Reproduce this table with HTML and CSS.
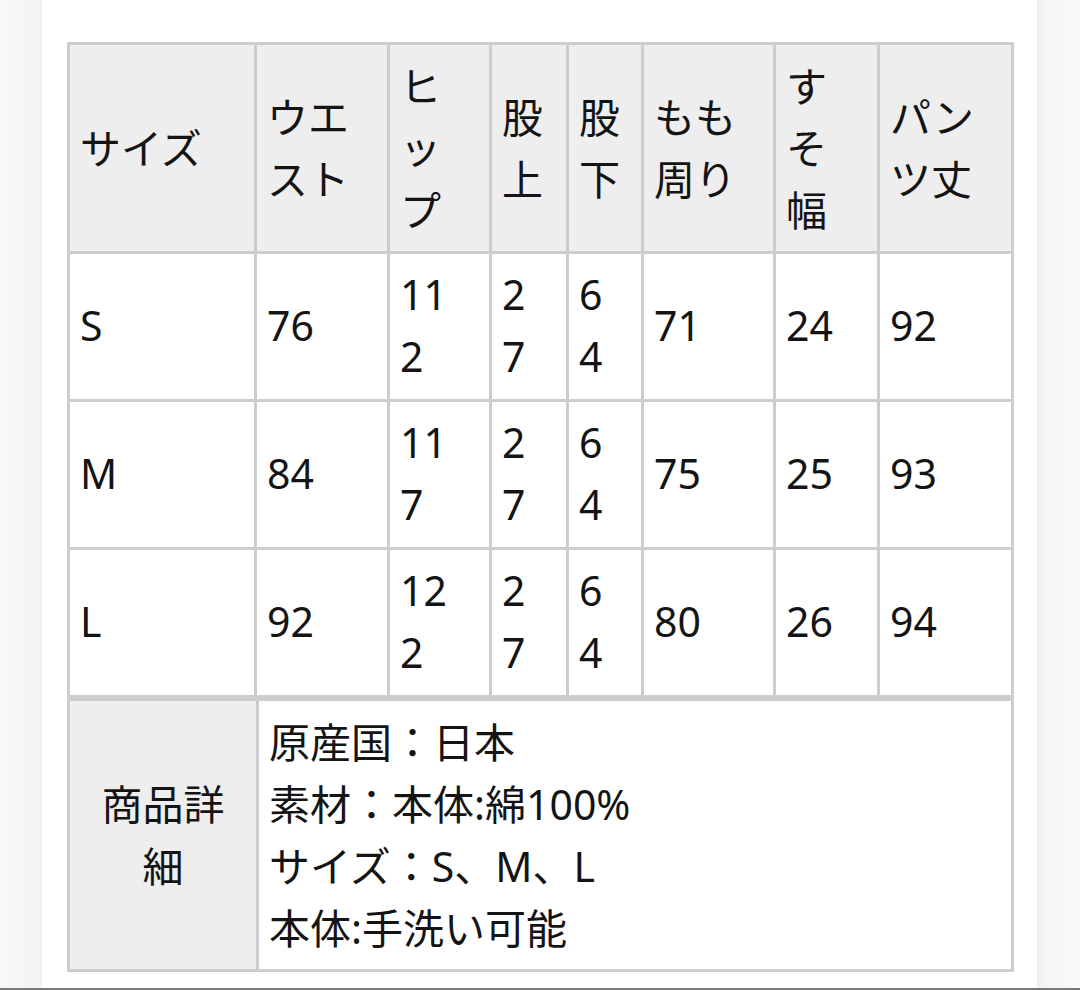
FILE: index.html
```html
<!DOCTYPE html>
<html lang="ja">
<head>
<meta charset="utf-8">
<title>サイズ表</title>
<link rel="stylesheet" href="styles.css">
</head>
<body>
<div class="page">
  <div class="card">
    <table class="size-table">
      <colgroup>
        <col class="c1"><col class="c2"><col class="c3"><col class="c4"><col class="c5"><col class="c6"><col class="c7"><col class="c8">
      </colgroup>
      <thead>
        <tr>
          <th>サイズ</th>
          <th>ウエスト</th>
          <th>ヒップ</th>
          <th>股上</th>
          <th>股下</th>
          <th>もも周り</th>
          <th>すそ幅</th>
          <th>パンツ丈</th>
        </tr>
      </thead>
      <tbody>
        <tr><td>S</td><td>76</td><td>112</td><td>27</td><td>64</td><td>71</td><td>24</td><td>92</td></tr>
        <tr><td>M</td><td>84</td><td>117</td><td>27</td><td>64</td><td>75</td><td>25</td><td>93</td></tr>
        <tr><td>L</td><td>92</td><td>122</td><td>27</td><td>64</td><td>80</td><td>26</td><td>94</td></tr>
      </tbody>
    </table>
    <table class="detail-table">
      <colgroup><col class="d1"><col class="d2"></colgroup>
      <tbody>
        <tr>
          <th>商品詳細</th>
          <td>原産国：日本<br>素材：本体:綿100%<br>サイズ：S、M、L<br>本体:手洗い可能</td>
        </tr>
      </tbody>
    </table>
  </div>
</div>
</body>
</html>
```

FILE: styles.css
```css
html, body {
  margin: 0;
  padding: 0;
}
body {
  background: #f6f6f6;
  font-family: "Noto Sans", "Noto Sans CJK JP", sans-serif;
  color: #141414;
}
.page {
  width: 1080px;
  height: 988px;
  border-bottom: 2px solid #7a7a7a;
  background: linear-gradient(to right, #f9f9f9 0, #f3f3f3 40px, #eeeeee 42px, #ffffff 42px, #ffffff 1037px, #eeeeee 1037px, #f5f5f5 1045px, #fafafa 1080px);
}
.card {
  margin: 0 43px 0 42px;
  height: 988px;
  padding: 42px 0 0 25px;
  box-sizing: border-box;
  background: #fff;
}
table {
  border-collapse: collapse;
  table-layout: fixed;
  width: 944px;
  font-size: 41px;
  line-height: 62px;
}
th, td {
  border: 3px solid #cdcdcd;
  padding: 10px 22px 10px 10px;
  text-align: left;
  vertical-align: middle;
  font-weight: 400;
  word-break: break-all;
}
.size-table thead th {
  background: #eeeeee;
  height: 186px;
}
.c1 { width: 187px; }
.c2 { width: 133px; }
.c3 { width: 102px; }
.c4 { width: 77px; }
.c5 { width: 75px; }
.c6 { width: 132px; }
.c7 { width: 104px; }
.c8 { width: 134px; }
.size-table tbody td {
  height: 125px;
  padding-top: 8px;
  padding-bottom: 12px;
}
.d1 { width: 189px; }
.d2 { width: 755px; }
.detail-table th {
  background: #eeeeee;
  text-align: center;
  padding: 10px 14px;
}
.detail-table td {
  padding: 10px 10px;
  height: 248px;
}
```
